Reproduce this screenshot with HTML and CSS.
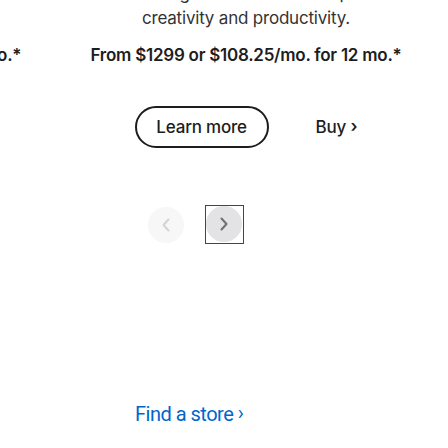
FILE: index.html
```html
<!DOCTYPE html>
<html lang="en">
<head>
<meta charset="utf-8">
<title>Mac</title>
<link rel="stylesheet" href="styles.css">
</head>
<body>
<main class="page">
  <section class="gallery">
    <div class="viewport">
      <div class="track">
        <article class="slide">
          <p class="desc">Strikingly thin and fast.<br>Built for Apple Intelligence.</p>
          <p class="price">From $1599 or $133.25/mo. for 12 mo.*</p>
          <div class="ctas">
            <a class="btn-outline" href="#">Learn more</a>
            <a class="link" href="#">Buy <span class="chev">›</span></a>
          </div>
        </article>
        <article class="slide">
          <p class="desc">Featuring the all-new M3 chip for<br>creativity and productivity.</p>
          <p class="price">From $1299 or $108.25/mo. for 12 mo.*</p>
          <div class="ctas">
            <a class="btn-outline" href="#">Learn more</a>
            <a class="link" href="#">Buy <span class="chev">›</span></a>
          </div>
        </article>
      </div>
    </div>
    <div class="paddles">
      <button class="paddle prev" disabled aria-label="Previous">
        <svg viewBox="0 0 10 14" width="10" height="14"><path d="M7.5 1.5 L2.5 7 L7.5 12.5" fill="none" stroke="currentColor" stroke-width="2" stroke-linecap="round" stroke-linejoin="round"/></svg>
      </button>
      <span class="focus-ring">
        <button class="paddle next" aria-label="Next">
          <svg viewBox="0 0 10 14" width="10" height="14"><path d="M2.5 1.5 L7.5 7 L2.5 12.5" fill="none" stroke="currentColor" stroke-width="2" stroke-linecap="round" stroke-linejoin="round"/></svg>
        </button>
      </span>
    </div>
  </section>
  <footer class="store-row">
    <a class="store" href="#">Find a store <span class="chev">›</span></a>
  </footer>
</main>
</body>
</html>
```

FILE: styles.css
```css
* { box-sizing: border-box; }
html, body {
  margin: 0;
  padding: 0;
  background: #fff;
  overflow: hidden;
}
body {
  font-family: Inter, "Noto Sans", "Liberation Sans", sans-serif;
  color: #1d1d1f;
  width: 448px;
  height: 448px;
}
.page {
  margin-top: -19px;
}
.viewport {
  overflow: hidden;
  width: 448px;
}
.track {
  display: flex;
  transform: translateX(-324px);
}
.slide {
  flex: 0 0 380px;
  display: flex;
  flex-direction: column;
  align-items: center;
  text-align: center;
}
.desc {
  margin: 0;
  font-size: 17px;
  line-height: 25px;
  color: #333336;
  letter-spacing: -0.2px;
  white-space: nowrap;
}
.price {
  margin: 12px 0 0;
  font-size: 17px;
  line-height: 25px;
  font-weight: 600;
  color: #1d1d1f;
  letter-spacing: -0.25px;
  white-space: nowrap;
}
.ctas {
  margin-top: 38px;
  display: flex;
  align-items: center;
  gap: 47px;
}
.btn-outline {
  display: flex;
  align-items: center;
  justify-content: center;
  width: 134px;
  height: 42px;
  border: 2px solid #1d1d1f;
  border-radius: 21px;
  font-size: 17px;
  font-weight: 500;
  color: #1d1d1f;
  text-decoration: none;
  letter-spacing: -0.2px;
}
.link {
  font-size: 17px;
  font-weight: 500;
  color: #1d1d1f;
  text-decoration: none;
  letter-spacing: -0.2px;
}
.chev {
  font-size: 17px;
  font-weight: 600;
  position: relative;
  top: -1px;
}
.paddles {
  display: flex;
  align-items: center;
  gap: 22px;
  padding-left: 148px;
  margin-top: 58px;
}
.paddle {
  width: 36px;
  height: 36px;
  border: none;
  border-radius: 50%;
  padding: 0;
  display: flex;
  align-items: center;
  justify-content: center;
  cursor: pointer;
}
.paddle.prev {
  background: #f7f7f8;
  color: #d4d4d7;
  cursor: default;
}
.paddle.next {
  background: #e3e3e6;
  color: #6e6e73;
}
.focus-ring {
  display: flex;
  padding: 0 1px 1px 0;
  outline: 1px solid rgb(232, 0, 0);
  outline-offset: 0;
}
.store-row {
  margin-top: 159px;
  padding-left: 135px;
}
.store {
  font-family: Roboto, Inter, sans-serif;
  font-size: 20px;
  line-height: 24px;
  color: #0066cc;
  text-decoration: none;
  letter-spacing: -0.5px;
}
.store .chev {
  font-size: 20px;
  font-weight: 400;
}
```
